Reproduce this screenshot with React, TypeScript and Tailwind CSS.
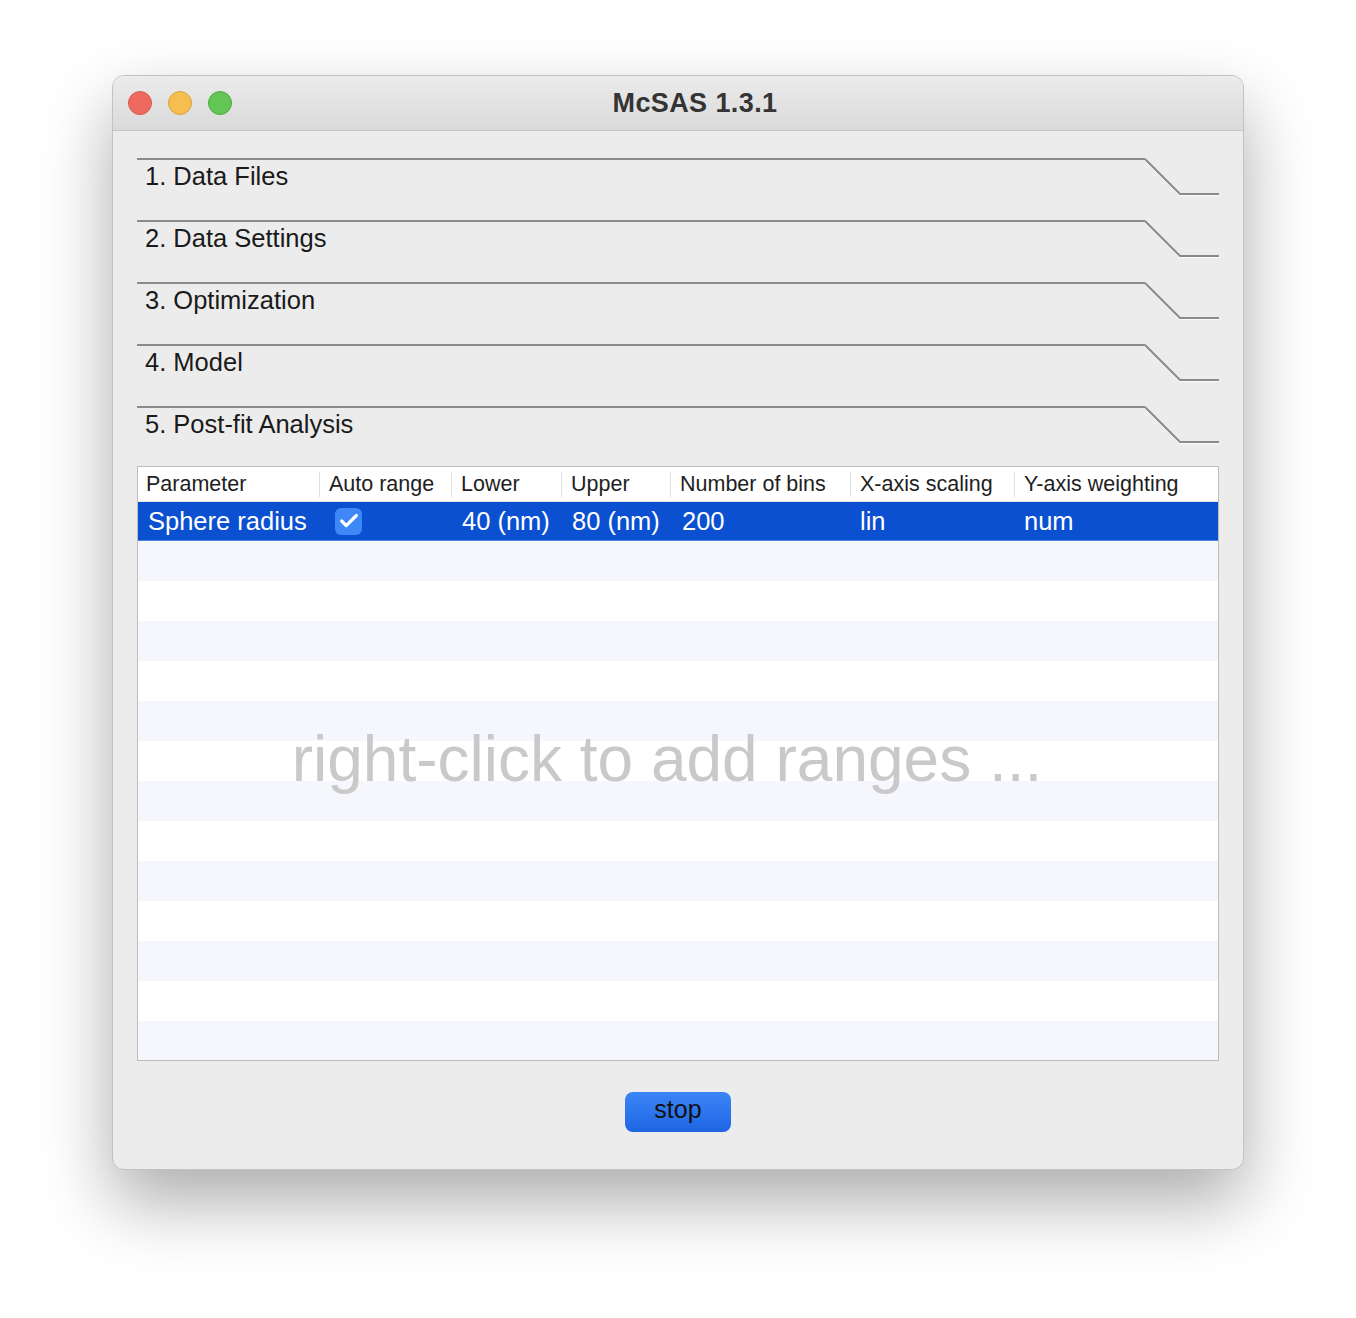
import { Check } from "lucide-react";

const sections = ["1. Data Files", "2. Data Settings", "3. Optimization", "4. Model", "5. Post-fit Analysis"];

const columns = [
  { title: "Parameter", width: "w-[181px]" },
  { title: "Auto range", width: "w-[132px]" },
  { title: "Lower", width: "w-[110px]" },
  { title: "Upper", width: "w-[109px]" },
  { title: "Number of bins", width: "w-[180px]" },
  { title: "X-axis scaling", width: "w-[164px]" },
  { title: "Y-axis weighting", width: "flex-1" },
];

function SectionTab({ label }: { label: string }) {
  return (
    <div className="flex h-[62px]">
      <div className="flex-1 border-t-2 border-[#8a8a8a] pl-[8px] pt-[1px] text-[25.5px] leading-[30px] text-[#1a1a1a]">
        {label}
      </div>
      <svg width="74" height="40" viewBox="0 0 74 40" className="shrink-0">
        <polyline points="0,2 35,37 74,37" fill="none" stroke="#ffffff" strokeWidth="1.5" />
        <polyline points="0,1 35,36 74,36" fill="none" stroke="#8a8a8a" strokeWidth="2" />
      </svg>
    </div>
  );
}

export default function App() {
  const stripes = Array.from({ length: 13 }, (_, i) => i);

  return (
    <div className="h-[1318px] w-[1356px] bg-white px-[112px] pt-[75px] font-['Liberation_Sans',Arial,sans-serif]">
      <div className="flex h-[1095px] flex-col overflow-hidden rounded-[12px] border border-[#c2c2c2] bg-[#ececec] shadow-[0_32px_70px_rgba(0,0,0,0.33)]">
        {/* title bar */}
        <div className="relative flex h-[55px] shrink-0 items-center border-b border-[#c6c6c6] bg-gradient-to-b from-[#ebebeb] to-[#dadada] pl-[15px]">
          <div className="flex gap-[16px]">
            <span className="h-[24px] w-[24px] rounded-full border border-[#d9584c] bg-[#ee6a5f]" />
            <span className="h-[24px] w-[24px] rounded-full border border-[#dba23c] bg-[#f5be4f]" />
            <span className="h-[24px] w-[24px] rounded-full border border-[#4ea940] bg-[#62c554]" />
          </div>
          <div className="absolute inset-0 flex items-center justify-center pl-[34px] text-[27px] font-bold tracking-[0.4px] text-[#343434]">
            McSAS 1.3.1
          </div>
        </div>

        {/* content */}
        <div className="flex flex-1 flex-col px-[24px] pt-[27px]">
          {sections.map((s) => (
            <SectionTab key={s} label={s} />
          ))}

          <div className="relative -mt-[2px] h-[595px] overflow-hidden border border-[#bcbcbc] bg-white">
            <div className="flex h-[35px] items-center border-b border-[#e4e4e4] text-[21.5px] leading-[35px] text-[#1e1e1e]">
              {columns.map((c, i) => (
                <div key={c.title} className={`flex h-full items-center ${c.width}`}>
                  {i > 0 && <span className="h-[25px] w-px bg-[#e0e0e0]" />}
                  <span className={i === 0 ? "pl-[8px]" : "pl-[9px]"}>{c.title}</span>
                </div>
              ))}
            </div>

            <div className="flex h-[39px] items-center border-b border-[#4f86e6] bg-[#0b50d1] text-[25.5px] leading-[39px] text-white">
              <div className="w-[181px] pl-[10px]">Sphere radius</div>
              <div className="w-[132px] pl-[16px]">
                <span className="flex h-[27px] w-[27px] items-center justify-center rounded-[6px] bg-[#3d87f7]">
                  <Check size={22} strokeWidth={3.5} className="text-white" />
                </span>
              </div>
              <div className="w-[110px] pl-[11px]">40 (nm)</div>
              <div className="w-[109px] pl-[11px]">80 (nm)</div>
              <div className="w-[180px] pl-[12px]">200</div>
              <div className="w-[164px] pl-[10px]">lin</div>
              <div className="flex-1 pl-[10px]">num</div>
            </div>

            {stripes.map((i) => (
              <div key={i} className={i % 2 === 0 ? "h-[40px] bg-[#f5f7fd]" : "h-[40px] bg-white"} />
            ))}

            <div className="pointer-events-none absolute inset-0 flex items-center justify-center pb-[9px] pr-[22px] text-[64px] text-[#c9c9c9]">
              right-click to add ranges ...
            </div>
          </div>

          <div className="flex justify-center pt-[31px]">
            <button
              type="button"
              className="h-[40px] w-[106px] rounded-[8px] bg-gradient-to-b from-[#3b85f6] to-[#1f65e4] pb-[6px] text-[25px] leading-[30px] text-[#111]"
            >
              stop
            </button>
          </div>
        </div>
      </div>
    </div>
  );
}
